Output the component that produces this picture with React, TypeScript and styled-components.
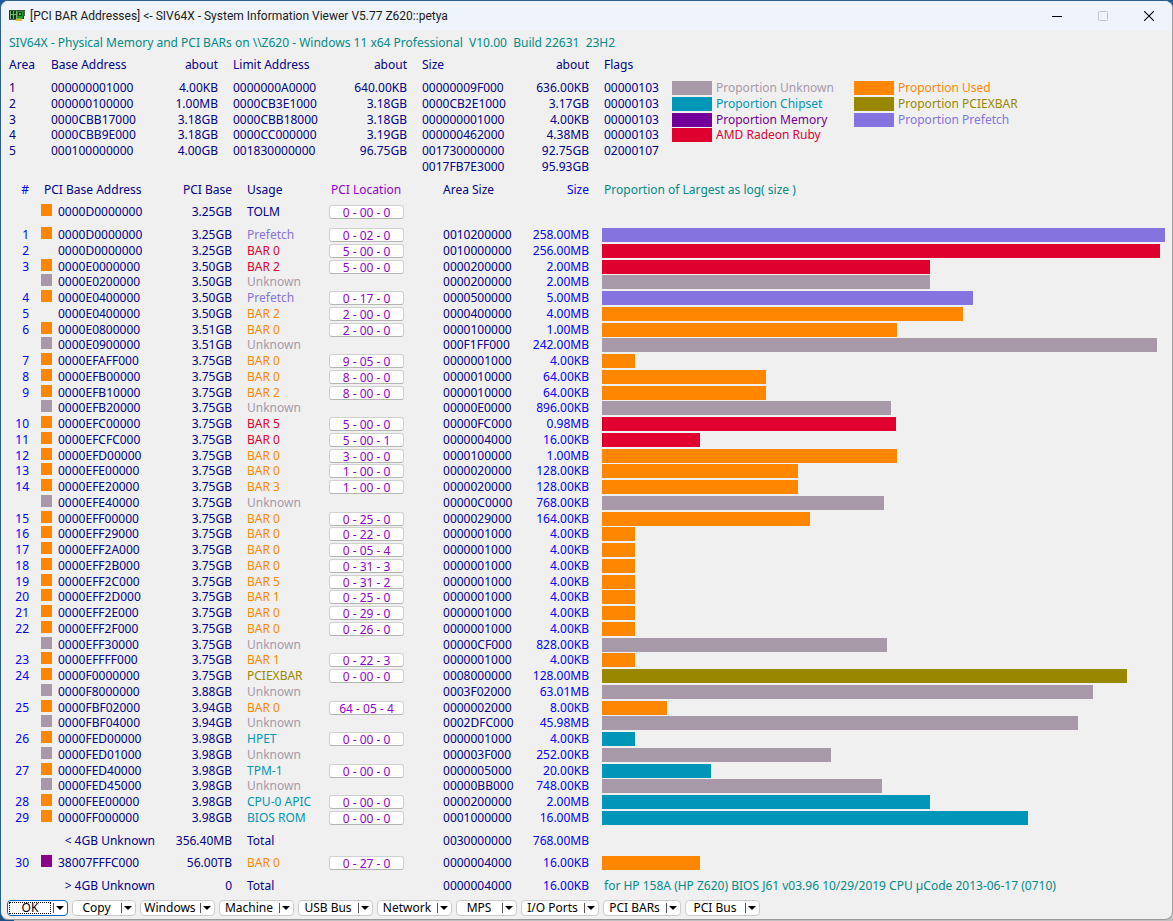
import React from "react";
import styled, { createGlobalStyle } from "styled-components";

const color = {
  unknown: "#a899a8",
  chipset: "#0096b7",
  memory: "#730099",
  radeon: "#e00030",
  used: "#ff8700",
  pciexbar: "#998700",
  prefetch: "#8573e0",
  navy: "#00008b",
  blue: "#0000ff",
  violet: "#9400d3",
  teal: "#008b8b",
  high: "#8b008b",
};

type Tone = keyof typeof color;

const GlobalStyle = createGlobalStyle`
  * { box-sizing: border-box; }
  body {
    margin: 0;
    background: linear-gradient(to right, #1c5288 14px, #c2c0c0 14px);
    font-family: "Noto Sans", "DejaVu Sans Condensed", sans-serif;
    font-size: 12px;
    line-height: 14px;
    color: ${color.navy};
  }
  button { font: inherit; color: inherit; }
`;

const Frame = styled.div`
  background: linear-gradient(to bottom, #1c5c9c 24px, transparent 24px);
`;

const Window = styled.div`
  background: #f0f0f0;
  border: 1px solid #2c5f90;
  border-right-color: #a0a0a0;
  border-bottom-color: #999999;
  border-radius: 8px;
  overflow: hidden;
`;

const TitleBar = styled.header`
  display: flex;
  align-items: center;
  height: 30px;
  padding-left: 8px;
  background: #eff3fb;
  color: #1a1a1a;
  font-family: Roboto, sans-serif;
`;

const Title = styled.h1`
  flex: 1;
  margin: 0 0 0 5px;
  font-size: 12px;
  font-weight: 400;
  line-height: 16px;
  white-space: nowrap;
`;

const CaptionButton = styled.button`
  display: flex;
  align-items: center;
  justify-content: center;
  width: 46px;
  height: 30px;
  padding: 0;
  border: 0;
  background: none;
  color: #000000;

  &:disabled { color: #bfc2c8; }
`;

const Heading = styled.h2`
  margin: 0;
  padding: 4px 8px 6px;
  font-size: 12px;
  font-weight: 400;
  line-height: 16px;
  color: ${color.teal};
  white-space: pre;
`;

const Summary = styled.section`
  display: flex;
  margin-bottom: 7px;
`;

const Grid = styled.table`
  table-layout: fixed;
  border-collapse: collapse;
  white-space: nowrap;

  th { font-weight: 400; }
`;

const SummaryGrid = styled(Grid)`
  width: 671px;
  flex: none;
`;

const MainGrid = styled(Grid)`
  width: 100%;
`;

const Col = styled.col<{ $w?: number }>`
  width: ${(p) => (p.$w ? `${p.$w}px` : "auto")};
`;

const Line = styled.tr<{ $h?: number }>`
  height: ${(p) => p.$h ?? 16}px;
  vertical-align: top;
`;

/* Rows follow a 63px rhythm per four lines: every fourth one is a pixel shorter. */
const Lines = styled.tbody`
  & > tr:nth-child(4n + 3) { height: 15px; }
`;

const Cell = styled.td<{ $tone?: Tone; $right?: boolean; $pad?: number }>`
  padding: 1px 0 0 ${(p) => p.$pad ?? 0}px;
  text-align: ${(p) => (p.$right ? "right" : "left")};
  color: ${(p) => color[p.$tone ?? "navy"]};
`;

const MarkCell = styled.td`
  padding: 0 0 0 12px;
`;

const Mark = styled.span<{ $tone: Tone }>`
  display: block;
  width: 11px;
  height: 12px;
  background: ${(p) => color[p.$tone]};
`;

const Location = styled.button`
  display: block;
  width: 75px;
  height: 14px;
  padding: 0;
  border: 1px solid #d0d0d0;
  border-bottom-color: #b4b4b4;
  border-radius: 3px;
  background: #ffffff;
  color: ${color.violet};
  line-height: 14px;
  text-align: center;
`;

const Bar = styled.div<{ $tone: Tone }>`
  height: 14px;
  background: ${(p) => color[p.$tone]};
`;

const BarCell = styled.td`
  padding: 1px 7px 0 13px;
`;

const Legend = styled.div`
  display: flex;
  padding-top: 23px;
`;

const LegendList = styled.ul`
  width: 182px;
  margin: 0;
  padding: 0;
  list-style: none;
`;

const LegendItem = styled.li<{ $tone: Tone }>`
  display: flex;
  gap: 4px;
  height: 16px;
  padding-top: 1px;
  color: ${(p) => color[p.$tone]};
  white-space: nowrap;

  &:nth-child(4n + 3) { height: 15px; }

  &::before {
    content: "";
    width: 40px;
    height: 14px;
    background: ${(p) => color[p.$tone]};
  }
`;

const ButtonBar = styled.footer`
  display: flex;
  gap: 4px;
  padding: 6px 6px 3px;
`;

const Split = styled.div<{ $w: number; $default?: boolean }>`
  display: flex;
  width: ${(p) => p.$w}px;
  height: 16px;
  border: 1px solid ${(p) => (p.$default ? "#0067c0" : "#cccccc")};
  border-radius: 4px;
  background: #ffffff;
  color: #000000;
`;

const SplitMain = styled.button<{ $focused?: boolean }>`
  flex: 1;
  min-width: 0;
  margin: 1px 1px 1px;
  padding: 0;
  border: ${(p) => (p.$focused ? "1px dotted #000000" : "1px solid transparent")};
  background: none;
  line-height: 10px;
  text-align: center;
  white-space: nowrap;
`;

const SplitArrow = styled.button`
  display: flex;
  align-items: center;
  justify-content: center;
  width: 13px;
  height: 10px;
  margin: 2px 1px 0 1px;
  padding: 0;
  border: 0;
  border-left: 1px solid #555555;
  background: none;
`;

const summaryRows = [
  ["1", "000000001000", "4.00KB", "0000000A0000", "640.00KB", "00000009F000", "636.00KB", "00000103"],
  ["2", "000000100000", "1.00MB", "0000CB3E1000", "3.18GB", "0000CB2E1000", "3.17GB", "00000103"],
  ["3", "0000CBB17000", "3.18GB", "0000CBB18000", "3.18GB", "000000001000", "4.00KB", "00000103"],
  ["4", "0000CBB9E000", "3.18GB", "0000CC000000", "3.19GB", "000000462000", "4.38MB", "00000103"],
  ["5", "000100000000", "4.00GB", "001830000000", "96.75GB", "001730000000", "92.75GB", "02000107"],
  ["", "", "", "", "", "0017FB7E3000", "95.93GB", ""],
];

const legend: [Tone, string][][] = [
  [
    ["unknown", "Proportion Unknown"],
    ["chipset", "Proportion Chipset"],
    ["memory", "Proportion Memory"],
    ["radeon", "AMD Radeon Ruby"],
  ],
  [
    ["used", "Proportion Used"],
    ["pciexbar", "Proportion PCIEXBAR"],
    ["prefetch", "Proportion Prefetch"],
  ],
];

/* number, marker, address, base, usage, tone, location, area size, size, bar length */
type Entry = [string, Tone | null, string, string, string, Tone, string, string, string, number];

const FULL_BAR = 563;

const entries: Entry[] = [
  ["1", "used", "0000D0000000", "3.25GB", "Prefetch", "prefetch", "0 - 02 - 0", "0010200000", "258.00MB", 563],
  ["2", null, "0000D0000000", "3.25GB", "BAR 0", "radeon", "5 - 00 - 0", "0010000000", "256.00MB", 558],
  ["3", "used", "0000E0000000", "3.50GB", "BAR 2", "radeon", "5 - 00 - 0", "0000200000", "2.00MB", 328],
  ["", "unknown", "0000E0200000", "3.50GB", "Unknown", "unknown", "", "0000200000", "2.00MB", 328],
  ["4", "used", "0000E0400000", "3.50GB", "Prefetch", "prefetch", "0 - 17 - 0", "0000500000", "5.00MB", 371],
  ["5", null, "0000E0400000", "3.50GB", "BAR 2", "used", "2 - 00 - 0", "0000400000", "4.00MB", 361],
  ["6", "used", "0000E0800000", "3.51GB", "BAR 0", "used", "2 - 00 - 0", "0000100000", "1.00MB", 295],
  ["", "unknown", "0000E0900000", "3.51GB", "Unknown", "unknown", "", "000F1FF000", "242.00MB", 555],
  ["7", "used", "0000EFAFF000", "3.75GB", "BAR 0", "used", "9 - 05 - 0", "0000001000", "4.00KB", 33],
  ["8", "used", "0000EFB00000", "3.75GB", "BAR 0", "used", "8 - 00 - 0", "0000010000", "64.00KB", 164],
  ["9", "used", "0000EFB10000", "3.75GB", "BAR 2", "used", "8 - 00 - 0", "0000010000", "64.00KB", 164],
  ["", "unknown", "0000EFB20000", "3.75GB", "Unknown", "unknown", "", "00000E0000", "896.00KB", 289],
  ["10", "used", "0000EFC00000", "3.75GB", "BAR 5", "radeon", "5 - 00 - 0", "00000FC000", "0.98MB", 294],
  ["11", "used", "0000EFCFC000", "3.75GB", "BAR 0", "radeon", "5 - 00 - 1", "0000004000", "16.00KB", 98],
  ["12", "used", "0000EFD00000", "3.75GB", "BAR 0", "used", "3 - 00 - 0", "0000100000", "1.00MB", 295],
  ["13", "used", "0000EFE00000", "3.75GB", "BAR 0", "used", "1 - 00 - 0", "0000020000", "128.00KB", 196],
  ["14", "used", "0000EFE20000", "3.75GB", "BAR 3", "used", "1 - 00 - 0", "0000020000", "128.00KB", 196],
  ["", "unknown", "0000EFE40000", "3.75GB", "Unknown", "unknown", "", "00000C0000", "768.00KB", 282],
  ["15", "used", "0000EFF00000", "3.75GB", "BAR 0", "used", "0 - 25 - 0", "0000029000", "164.00KB", 208],
  ["16", "used", "0000EFF29000", "3.75GB", "BAR 0", "used", "0 - 22 - 0", "0000001000", "4.00KB", 33],
  ["17", "used", "0000EFF2A000", "3.75GB", "BAR 0", "used", "0 - 05 - 4", "0000001000", "4.00KB", 33],
  ["18", "used", "0000EFF2B000", "3.75GB", "BAR 0", "used", "0 - 31 - 3", "0000001000", "4.00KB", 33],
  ["19", "used", "0000EFF2C000", "3.75GB", "BAR 5", "used", "0 - 31 - 2", "0000001000", "4.00KB", 33],
  ["20", "used", "0000EFF2D000", "3.75GB", "BAR 1", "used", "0 - 25 - 0", "0000001000", "4.00KB", 33],
  ["21", "used", "0000EFF2E000", "3.75GB", "BAR 0", "used", "0 - 29 - 0", "0000001000", "4.00KB", 33],
  ["22", "used", "0000EFF2F000", "3.75GB", "BAR 0", "used", "0 - 26 - 0", "0000001000", "4.00KB", 33],
  ["", "unknown", "0000EFF30000", "3.75GB", "Unknown", "unknown", "", "00000CF000", "828.00KB", 285],
  ["23", "used", "0000EFFFF000", "3.75GB", "BAR 1", "used", "0 - 22 - 3", "0000001000", "4.00KB", 33],
  ["24", "used", "0000F0000000", "3.75GB", "PCIEXBAR", "pciexbar", "0 - 00 - 0", "0008000000", "128.00MB", 525],
  ["", "unknown", "0000F8000000", "3.88GB", "Unknown", "unknown", "", "0003F02000", "63.01MB", 491],
  ["25", "used", "0000FBF02000", "3.94GB", "BAR 0", "used", "64 - 05 - 4", "0000002000", "8.00KB", 65],
  ["", "unknown", "0000FBF04000", "3.94GB", "Unknown", "unknown", "", "0002DFC000", "45.98MB", 476],
  ["26", "used", "0000FED00000", "3.98GB", "HPET", "chipset", "0 - 00 - 0", "0000001000", "4.00KB", 33],
  ["", "unknown", "0000FED01000", "3.98GB", "Unknown", "unknown", "", "000003F000", "252.00KB", 229],
  ["27", "used", "0000FED40000", "3.98GB", "TPM-1", "chipset", "0 - 00 - 0", "0000005000", "20.00KB", 109],
  ["", "unknown", "0000FED45000", "3.98GB", "Unknown", "unknown", "", "00000BB000", "748.00KB", 280],
  ["28", "used", "0000FEE00000", "3.98GB", "CPU-0 APIC", "chipset", "0 - 00 - 0", "0000200000", "2.00MB", 328],
  ["29", "used", "0000FF000000", "3.98GB", "BIOS ROM", "chipset", "0 - 00 - 0", "0001000000", "16.00MB", 426],
];

const highEntry: Entry = [
  "30", "high", "38007FFFC000", "56.00TB", "BAR 0", "used", "0 - 27 - 0", "0000004000", "16.00KB", 98,
];

const topOfMemory: Entry = [
  "", "used", "0000D0000000", "3.25GB", "TOLM", "navy", "0 - 00 - 0", "", "", 0,
];

const actions: [string, number][] = [
  ["OK", 61],
  ["Copy", 64],
  ["Windows", 75],
  ["Machine", 75],
  ["USB Bus", 75],
  ["Network", 75],
  ["MPS", 61],
  ["I/O Ports", 78],
  ["PCI BARs", 78],
  ["PCI Bus", 75],
];

function EntryRow({ entry, height }: { entry: Entry; height?: number }) {
  const [num, mark, address, base, usage, tone, location, area, size, length] = entry;
  return (
    <Line $h={height}>
      <Cell $right $tone="blue">{num}</Cell>
      <MarkCell>{mark && <Mark $tone={mark} />}</MarkCell>
      <Cell>{address}</Cell>
      <Cell $right>{base}</Cell>
      <Cell $tone={tone} $pad={15}>{usage}</Cell>
      <Cell>{location && <Location type="button">{location}</Location>}</Cell>
      <Cell>{area}</Cell>
      <Cell $right $tone="blue">{size}</Cell>
      <BarCell>
        {length > 0 && <Bar $tone={tone} style={{ width: `${(length / FULL_BAR) * 100}%` }} />}
      </BarCell>
    </Line>
  );
}

function TotalRow(p: { label: string; base: string; area: string; size: string; note?: string; height: number }) {
  return (
    <Line $h={p.height}>
      <Cell />
      <Cell $right colSpan={2}>{p.label}</Cell>
      <Cell $right>{p.base}</Cell>
      <Cell $pad={15}>Total</Cell>
      <Cell />
      <Cell>{p.area}</Cell>
      <Cell $right $tone="blue">{p.size}</Cell>
      <Cell $tone="teal" $pad={15}>{p.note}</Cell>
    </Line>
  );
}

function CardIcon() {
  return (
    <svg width="16" height="12" viewBox="0 0 16 12" shapeRendering="crispEdges" aria-hidden="true">
      <rect x="0" y="0" width="16" height="1" fill="#3c4a3c" />
      <rect x="0" y="1" width="15" height="8" fill="#14421a" />
      <path d="M2 2h1v2H2zM5 2h1v2H5zM2 6h1v2H2zM5 6h1v2H5z" fill="#0c240f" />
      <path d="M1 1h1v8H1zM4 1h1v8H4zM7 1h1v8H7zM1 4h7v1H1z" fill="#6fb86f" />
      <rect x="8" y="1" width="6" height="7" fill="#1f9a28" />
      <rect x="9" y="2" width="4" height="4" fill="#0f3d14" />
      <rect x="10" y="3" width="2" height="2" fill="#3fb545" />
      <rect x="14" y="1" width="2" height="5" fill="#4f5a4f" />
      <rect x="0" y="9" width="7" height="1" fill="#5a5a5a" />
      <rect x="8" y="8" width="5" height="1" fill="#8aa02a" />
      <rect x="7" y="9" width="6" height="2" fill="#d0c034" />
    </svg>
  );
}

export default function App() {
  return (
    <Frame>
      <GlobalStyle />
      <Window>
        <TitleBar>
          <CardIcon />
          <Title>[PCI BAR Addresses] &lt;- SIV64X - System Information Viewer V5.77 Z620::petya</Title>
          <CaptionButton type="button" aria-label="Minimize">
            <svg width="10" height="10" viewBox="0 0 10 10"><path d="M0 5.5h10" stroke="currentColor" /></svg>
          </CaptionButton>
          <CaptionButton type="button" aria-label="Maximize" disabled>
            <svg width="10" height="10" viewBox="0 0 10 10">
              <rect x="0.5" y="0.5" width="9" height="9" rx="1" fill="none" stroke="currentColor" />
            </svg>
          </CaptionButton>
          <CaptionButton type="button" aria-label="Close">
            <svg width="10" height="10" viewBox="0 0 10 10">
              <path d="M0 0L10 10M10 0L0 10" stroke="currentColor" strokeWidth="1.1" />
            </svg>
          </CaptionButton>
        </TitleBar>

        <main>
          <Heading>{"SIV64X - Physical Memory and PCI BARs on \\\\Z620 - Windows 11 x64 Professional  V10.00  Build 22631  23H2"}</Heading>

          <Summary>
            <SummaryGrid>
              <colgroup>
                <Col $w={50} /><Col $w={100} /><Col $w={67} /><Col $w={115} />
                <Col $w={74} /><Col $w={115} /><Col $w={67} /><Col $w={83} />
              </colgroup>
              <thead>
                <Line $h={23}>
                  <Cell as="th" $pad={8}>Area</Cell>
                  <Cell as="th">Base Address</Cell>
                  <Cell as="th" $right>about</Cell>
                  <Cell as="th" $pad={15}>Limit Address</Cell>
                  <Cell as="th" $right>about</Cell>
                  <Cell as="th" $pad={15}>Size</Cell>
                  <Cell as="th" $right>about</Cell>
                  <Cell as="th" $pad={15}>Flags</Cell>
                </Line>
              </thead>
              <Lines>
                {summaryRows.map((r, i) => (
                  <Line key={i}>
                    <Cell $pad={8}>{r[0]}</Cell>
                    <Cell>{r[1]}</Cell>
                    <Cell $right>{r[2]}</Cell>
                    <Cell $pad={15}>{r[3]}</Cell>
                    <Cell $right>{r[4]}</Cell>
                    <Cell $pad={15}>{r[5]}</Cell>
                    <Cell $right>{r[6]}</Cell>
                    <Cell $pad={15}>{r[7]}</Cell>
                  </Line>
                ))}
              </Lines>
            </SummaryGrid>
            <Legend>
              {legend.map((list, i) => (
                <LegendList key={i}>
                  {list.map(([tone, label]) => (
                    <LegendItem key={label} $tone={tone}>{label}</LegendItem>
                  ))}
                </LegendList>
              ))}
            </Legend>
          </Summary>

          <MainGrid>
            <colgroup>
              <Col $w={28} /><Col $w={29} /><Col $w={97} /><Col $w={77} /><Col $w={97} />
              <Col $w={114} /><Col $w={77} /><Col $w={69} /><Col />
            </colgroup>
            <thead>
              <Line $h={22}>
                <Cell as="th" $right $tone="blue">#</Cell>
                <Cell as="th" $pad={15} colSpan={2}>PCI Base Address</Cell>
                <Cell as="th" $right>PCI Base</Cell>
                <Cell as="th" $pad={15}>Usage</Cell>
                <Cell as="th" $pad={2} $tone="violet">PCI Location</Cell>
                <Cell as="th">Area Size</Cell>
                <Cell as="th" $right $tone="blue">Size</Cell>
                <Cell as="th" $tone="teal" $pad={15}>Proportion of Largest as log( size )</Cell>
              </Line>
            </thead>
            <tbody>
              <EntryRow entry={topOfMemory} height={23} />
            </tbody>
            <Lines>
              {entries.map((entry, i) => (
                <EntryRow key={i} entry={entry} height={i === entries.length - 1 ? 23 : 16} />
              ))}
            </Lines>
            <tbody>
              <TotalRow label="< 4GB Unknown" base="356.40MB" area="0030000000" size="768.00MB" height={22} />
              <EntryRow entry={highEntry} height={23} />
              <TotalRow
                label="> 4GB Unknown"
                base="0"
                area="0000004000"
                size="16.00KB"
                height={16}
                note="for HP 158A (HP Z620) BIOS J61 v03.96 10/29/2019 CPU µCode 2013-06-17 (0710)"
              />
            </tbody>
          </MainGrid>
        </main>

        <ButtonBar>
          {actions.map(([label, width], i) => (
            <Split key={label} $w={width} $default={i === 0}>
              <SplitMain type="button" $focused={i === 0}>{label}</SplitMain>
              <SplitArrow type="button" aria-label={`${label} menu`}>
                <svg width="8" height="4" viewBox="0 0 8 4"><path d="M0 0h8L4 4z" fill="#000000" /></svg>
              </SplitArrow>
            </Split>
          ))}
        </ButtonBar>
      </Window>
    </Frame>
  );
}
